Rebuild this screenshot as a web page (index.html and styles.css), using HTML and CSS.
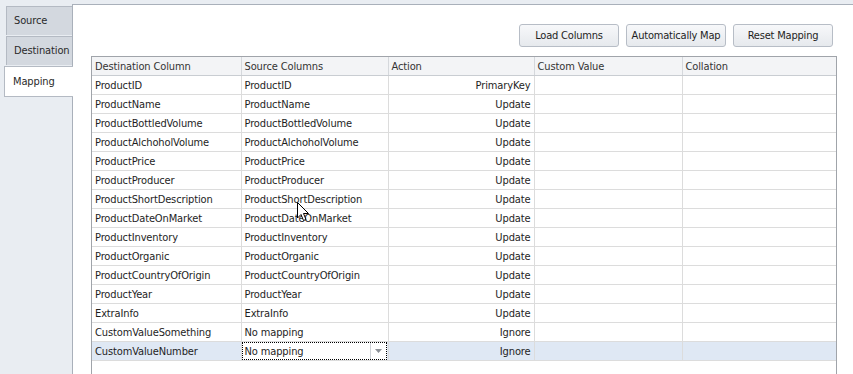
FILE: index.html
```html
<!DOCTYPE html>
<html lang="en">
<head>
    <meta charset="UTF-8">
    <title>Mapping</title>
    <link rel="stylesheet" href="styles.css">
</head>
<body>
    <div class="tabs">
        <div class="tab">Source</div>
        <div class="tab">Destination</div>
        <div class="tab active">Mapping</div>
    </div>
    <div class="panel">
        <div class="toolbar">
            <button class="btn">Load Columns</button>
            <button class="btn">Automatically Map</button>
            <button class="btn">Reset Mapping</button>
        </div>
        <div class="grid">
            <table>
                <colgroup>
                    <col style="width:149px"><col style="width:147px"><col style="width:146px"><col style="width:148px"><col>
                </colgroup>
                <thead>
                    <tr><th>Destination Column</th><th>Source Columns</th><th>Action</th><th>Custom Value</th><th>Collation</th></tr>
                </thead>
                <tbody>
                    <tr><td>ProductID</td><td>ProductID</td><td class="act">PrimaryKey</td><td></td><td></td></tr>
                    <tr><td>ProductName</td><td>ProductName</td><td class="act">Update</td><td></td><td></td></tr>
                    <tr><td>ProductBottledVolume</td><td>ProductBottledVolume</td><td class="act">Update</td><td></td><td></td></tr>
                    <tr><td>ProductAlchoholVolume</td><td>ProductAlchoholVolume</td><td class="act">Update</td><td></td><td></td></tr>
                    <tr><td>ProductPrice</td><td>ProductPrice</td><td class="act">Update</td><td></td><td></td></tr>
                    <tr><td>ProductProducer</td><td>ProductProducer</td><td class="act">Update</td><td></td><td></td></tr>
                    <tr><td>ProductShortDescription</td><td class="cursor-cell">ProductShortDescription
                        <svg class="cursor" width="13" height="20" viewBox="0 0 13 20"><path d="M0.5 0.5 L0.5 16 L4 12.5 L6.5 18.5 L9 17.5 L6.5 11.5 L11.5 11.5 Z" fill="#fff" stroke="#000" stroke-width="1"/></svg>
                    </td><td class="act">Update</td><td></td><td></td></tr>
                    <tr><td>ProductDateOnMarket</td><td>ProductDateOnMarket</td><td class="act">Update</td><td></td><td></td></tr>
                    <tr><td>ProductInventory</td><td>ProductInventory</td><td class="act">Update</td><td></td><td></td></tr>
                    <tr><td>ProductOrganic</td><td>ProductOrganic</td><td class="act">Update</td><td></td><td></td></tr>
                    <tr><td>ProductCountryOfOrigin</td><td>ProductCountryOfOrigin</td><td class="act">Update</td><td></td><td></td></tr>
                    <tr><td>ProductYear</td><td>ProductYear</td><td class="act">Update</td><td></td><td></td></tr>
                    <tr><td>ExtraInfo</td><td>ExtraInfo</td><td class="act">Update</td><td></td><td></td></tr>
                    <tr><td>CustomValueSomething</td><td>No mapping</td><td class="act">Ignore</td><td></td><td></td></tr>
                    <tr class="selected"><td>CustomValueNumber</td><td class="editor"><div class="combo"><span>No mapping</span><span class="drop"><svg width="7" height="4" viewBox="0 0 7 4"><path d="M0 0 H7 L3.5 4 Z" fill="#8a8f96"/></svg></span></div></td><td class="act">Ignore</td><td></td><td></td></tr>
                </tbody>
            </table>
        </div>
    </div>
</body>
</html>
```

FILE: styles.css
```css
body {margin:0; height:374px; overflow:hidden; display:flex; background:#e9edf2; font-family:Tahoma, "DejaVu Sans Condensed", "Liberation Sans", sans-serif; font-size:11px; letter-spacing:-0.12px; color:#1e1e1e}
.tabs {width:68px; padding:6px 0 0 4px; display:flex; flex-direction:column}
.tab {height:28px; line-height:28px; margin-left:2px; padding-left:7px; background:#d3d8df; border:1px solid #b4bac3; border-right:none; border-bottom:none; color:#2a2a2a}
.tab + .tab {margin-top:1px}
.tab.active {margin-left:0; height:29px; line-height:29px; padding-left:8px; background:#fff; border:1px solid #b4bac3; border-right:none; margin-right:-1px; position:relative; z-index:1}
.panel {flex:1; margin-top:4px; background:#fff; border-top:1px solid #a9b0ba; border-left:1px solid #a9b0ba; padding:19px 0 0 18px}
.toolbar {display:flex; justify-content:flex-end; gap:7px; padding-right:20px; height:24px}
.btn {width:100px; height:23px; font:inherit; letter-spacing:-0.2px; color:#1e1e1e; background:linear-gradient(#f7f8fa, #e6e9ed); border:1px solid #b7bdc6; border-radius:3px; padding:0}
.grid {margin-top:8px; width:744px; height:330px; border:1px solid #a0a4aa; border-bottom:none}
table {border-collapse:collapse; table-layout:fixed; width:100%}
th {height:18px; padding:0 3px; text-align:left; font-weight:normal; color:#333; background:#f3f4f6; border-right:1px solid #d5d8dc; border-bottom:1px solid #c9cdd2}
td {height:18px; padding:0 3px; border-right:1px solid #dcdcdc; border-bottom:1px solid #dcdcdc; white-space:nowrap; overflow:hidden}
th:last-child, td:last-child {border-right:none}
td.act {text-align:right; padding-right:3px}
tr.selected td {background:#dfe8f4}
td.editor {padding:0 1px 0 0}
.combo {height:16px; display:flex; align-items:center; justify-content:space-between; border:1px dotted #000; background:#fff; padding-left:2px}
.drop {width:15px; height:16px; display:flex; align-items:center; justify-content:center; border-left:1px solid #d0d3d8}
.cursor-cell {position:relative; overflow:visible}
.cursor {position:absolute; left:55px; top:12px; z-index:2}
```
